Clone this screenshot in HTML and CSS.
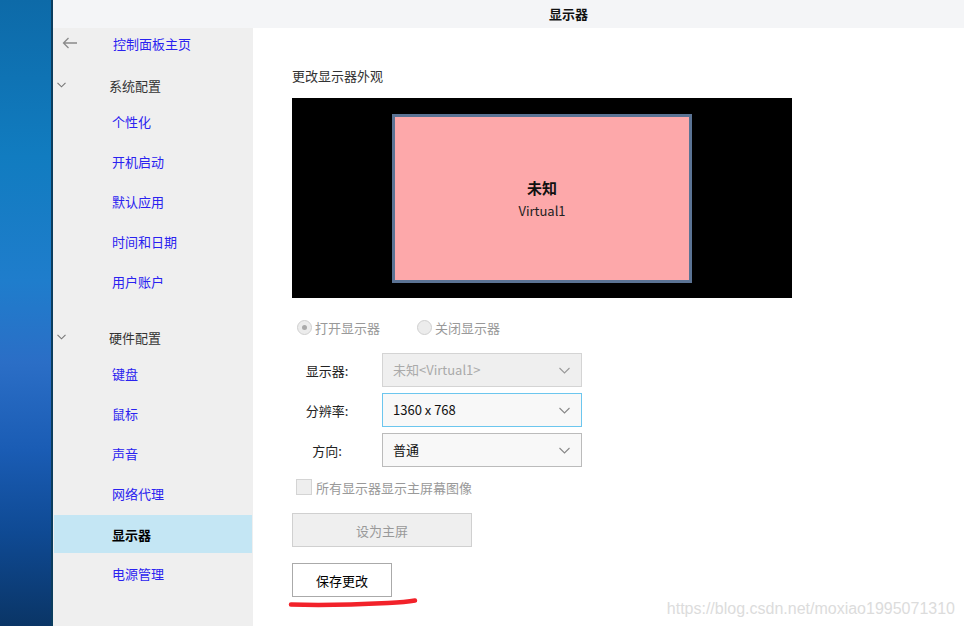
FILE: index.html
```html
<!DOCTYPE html>
<html lang="zh-CN">
<head>
  <meta charset="UTF-8">
  <title>显示器</title>
  <link rel="stylesheet" href="styles.css">
</head>
<body>
  <div class="desktop"></div>
  <div class="window">
    <div class="titlebar">显示器</div>
    <div class="window-body">
      <div class="sidebar">
        <div class="nav-home">
          <svg class="back-icon" width="16" height="12" viewBox="0 0 16 12">
            <path d="M15 6H1.5M6.5 1L1.5 6l5 5" fill="none" stroke="#8a8a8a" stroke-width="1.3"/>
          </svg>
          <a href="#" class="nav-link">控制面板主页</a>
        </div>
        <div class="nav-group">
          <svg class="chevron" width="9" height="6" viewBox="0 0 9 6">
            <path d="M0.5 0.8L4.5 4.8 8.5 0.8" fill="none" stroke="#777" stroke-width="1.1"/>
          </svg>
          <span>系统配置</span>
        </div>
        <a href="#" class="nav-item">个性化</a>
        <a href="#" class="nav-item">开机启动</a>
        <a href="#" class="nav-item">默认应用</a>
        <a href="#" class="nav-item">时间和日期</a>
        <a href="#" class="nav-item">用户账户</a>
        <div class="nav-group group-second">
          <svg class="chevron" width="9" height="6" viewBox="0 0 9 6">
            <path d="M0.5 0.8L4.5 4.8 8.5 0.8" fill="none" stroke="#777" stroke-width="1.1"/>
          </svg>
          <span>硬件配置</span>
        </div>
        <a href="#" class="nav-item">键盘</a>
        <a href="#" class="nav-item">鼠标</a>
        <a href="#" class="nav-item">声音</a>
        <a href="#" class="nav-item">网络代理</a>
        <a href="#" class="nav-item active">显示器</a>
        <a href="#" class="nav-item">电源管理</a>
      </div>

      <div class="content">
        <div class="section-title">更改显示器外观</div>
        <div class="screen-area">
          <div class="monitor">
            <div class="monitor-name">未知</div>
            <div class="monitor-output">Virtual1</div>
          </div>
        </div>

        <div class="radio-row">
          <label class="radio"><span class="radio-dot checked"></span>打开显示器</label>
          <label class="radio"><span class="radio-dot"></span>关闭显示器</label>
        </div>

        <div class="form-row">
          <span class="form-label">显示器:</span>
          <div class="combo disabled">未知&lt;Virtual1&gt;
            <svg class="combo-arrow" width="11" height="7" viewBox="0 0 11 7"><path d="M0.5 1L5.5 6 10.5 1" fill="none" stroke="#999" stroke-width="1.1"/></svg>
          </div>
        </div>
        <div class="form-row">
          <span class="form-label">分辨率:</span>
          <div class="combo focused">1360 x 768
            <svg class="combo-arrow" width="11" height="7" viewBox="0 0 11 7"><path d="M0.5 1L5.5 6 10.5 1" fill="none" stroke="#888" stroke-width="1.1"/></svg>
          </div>
        </div>
        <div class="form-row">
          <span class="form-label">方向:</span>
          <div class="combo">普通
            <svg class="combo-arrow" width="11" height="7" viewBox="0 0 11 7"><path d="M0.5 1L5.5 6 10.5 1" fill="none" stroke="#888" stroke-width="1.1"/></svg>
          </div>
        </div>

        <label class="check-row"><span class="check-box"></span>所有显示器显示主屏幕图像</label>

        <button class="btn btn-primary-screen" disabled>设为主屏</button>
        <button class="btn btn-save">保存更改</button>

        <svg class="scribble" width="140" height="14" viewBox="0 0 140 14">
          <path d="M3 9.5C30 10.5 70 9.5 100 8C115 7.2 124 6 127 5.5" fill="none" stroke="#f2222a" stroke-width="4.5" stroke-linecap="round"/>
        </svg>

        <div class="watermark">https://blog.csdn.net/moxiao1995071310</div>
      </div>
    </div>
  </div>
</body>
</html>
```

FILE: styles.css
```css
body {
  margin: 0;
  padding: 0;
  display: flex;
  height: 626px;
  overflow: hidden;
  font-family: "Noto Sans CJK SC", "Noto Sans", sans-serif;
  font-size: 13px;
}
.desktop {
  width: 51px;
  flex-shrink: 0;
  border-right: 2px solid #0b3d5e;
  background: linear-gradient(180deg, #0d6aa8 0%, #117cc0 25%, #1f7dcc 45%, #2b6ec6 58%, #1a5cb4 72%, #0f4a94 85%, #0a3566 100%);
}
.window {
  flex: 1;
  display: flex;
  flex-direction: column;
  background: white;
}
.titlebar {
  height: 28px;
  line-height: 28px;
  background-color: #f4f5f7;
  text-align: center;
  padding-left: 120px;
  font-weight: bold;
  color: #111;
}
.window-body {
  flex: 1;
  display: flex;
}
.sidebar {
  width: 200px;
  background-color: #efefef;
  display: flex;
  flex-direction: column;
}
.nav-home {
  height: 30px;
  display: flex;
  align-items: center;
}
.back-icon {
  margin-left: 9px;
  margin-right: 35px;
}
.nav-link, .nav-item {
  color: #2a22f0;
  text-decoration: none;
}
.nav-group {
  height: 32px;
  margin-top: 11px;
  display: flex;
  align-items: center;
  color: #333;
}
.group-second {
  margin-top: 20px;
}
.chevron {
  margin-left: 4px;
  margin-right: 43px;
}
.nav-item {
  height: 40px;
  display: flex;
  align-items: center;
  padding-left: 59px;
}
.nav-item.active {
  height: 38px;
  margin: 2px 1px 0 1px;
  background-color: #c4e6f4;
  color: #000;
  font-weight: bold;
  padding-left: 58px;
}
.content {
  flex: 1;
  position: relative;
  padding: 38px 0 0 39px;
  display: flex;
  flex-direction: column;
  align-items: flex-start;
  color: #333;
}
.section-title {
  height: 20px;
  line-height: 20px;
}
.screen-area {
  position: relative;
  margin-top: 12px;
  width: 500px;
  height: 200px;
  background: #000;
}
.monitor {
  position: absolute;
  left: 100px;
  top: 16px;
  width: 294px;
  height: 163px;
  border: 3px solid #5b7394;
  background-color: #fda8aa;
  display: flex;
  flex-direction: column;
  align-items: center;
  justify-content: center;
  color: #111;
}
.monitor-name {
  font-size: 15px;
  font-weight: bold;
  line-height: 22px;
}
.monitor-output {
  margin-top: 2px;
  font-size: 13px;
  line-height: 20px;
  color: #222;
}
.radio-row {
  margin-top: 19px;
  height: 20px;
  display: flex;
  align-items: center;
  color: #999;
}
.radio {
  display: flex;
  align-items: center;
  margin-right: 32px;
}
.radio-dot {
  width: 13px;
  height: 13px;
  margin: 0 3px 0 5px;
  border: 1px solid #d0d0d0;
  border-radius: 50%;
  background: #ececec;
  position: relative;
}
.radio-dot.checked::after {
  content: "";
  position: absolute;
  left: 4px;
  top: 4px;
  width: 5px;
  height: 5px;
  border-radius: 50%;
  background: #aaa;
}
.form-row {
  display: flex;
  align-items: center;
  margin-top: 16px;
}
.form-row + .form-row {
  margin-top: 6px;
}
.form-label {
  width: 70px;
  margin-right: 20px;
  text-align: center;
  color: #222;
}
.combo {
  position: relative;
  width: 188px;
  height: 32px;
  line-height: 32px;
  padding-left: 10px;
  border: 1px solid #bbb;
  background: #f8f8f8;
  color: #111;
}
.combo.disabled {
  background: #efefef;
  border-color: #d4d4d4;
  color: #aaa;
}
.combo.focused {
  border-color: #6cc6ee;
}
.combo-arrow {
  position: absolute;
  right: 11px;
  top: 13px;
}
.check-row {
  margin-top: 10px;
  height: 20px;
  display: flex;
  align-items: center;
  color: #999;
}
.check-box {
  width: 14px;
  height: 14px;
  margin: 0 4px 0 4px;
  border: 1px solid #d4d4d4;
  background: #eee;
}
.btn {
  font-family: inherit;
  font-size: 13px;
  height: 34px;
  padding: 0;
}
.btn-primary-screen {
  margin-top: 16px;
  width: 180px;
  background: #efefef;
  border: 1px solid #d0d0d0;
  color: #999;
}
.btn-save {
  margin-top: 16px;
  width: 100px;
  background: #fff;
  border: 1px solid #aaa;
  color: #000;
}
.scribble {
  position: absolute;
  left: 35px;
  top: 567px;
}
.watermark {
  position: absolute;
  right: 9px;
  bottom: 8px;
  font-family: "Liberation Sans", Arial, sans-serif;
  font-size: 16px;
  color: #dcdcdc;
}
```
